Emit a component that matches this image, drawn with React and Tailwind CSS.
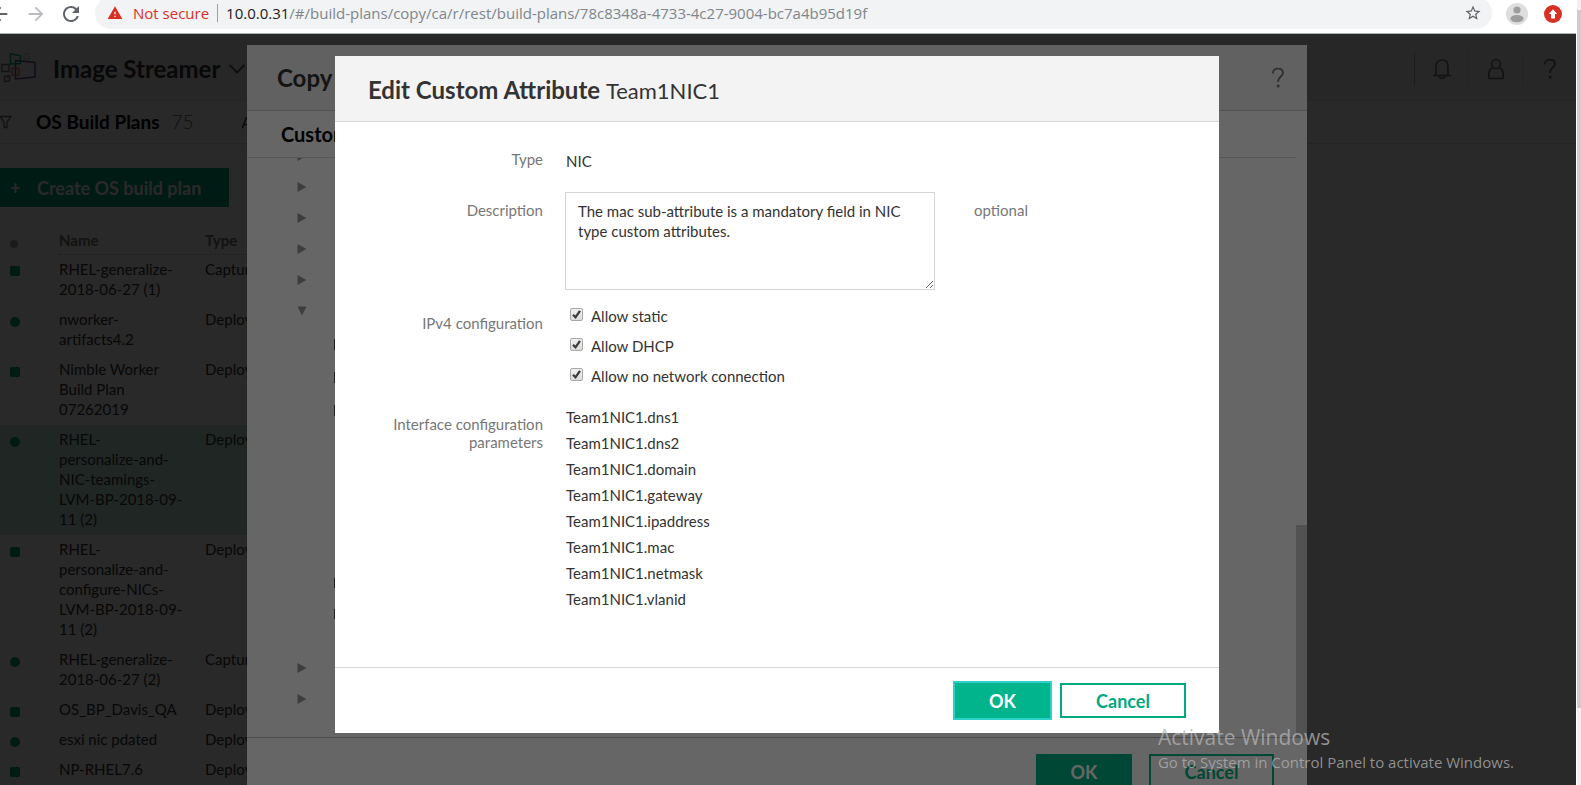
import { MdArrowBack, MdArrowForward, MdRefresh, MdStarBorder, MdWarning } from "react-icons/md";

const buildPlans = [
  { name: "RHEL-generalize-\n2018-06-27 (1)", type: "Capture" },
  { name: "nworker-\nartifacts4.2", type: "Deploy", round: true },
  { name: "Nimble Worker\nBuild Plan\n07262019", type: "Deploy" },
  { name: "RHEL-\npersonalize-and-\nNIC-teamings-\nLVM-BP-2018-09-\n11 (2)", type: "Deploy", round: true, selected: true },
  { name: "RHEL-\npersonalize-and-\nconfigure-NICs-\nLVM-BP-2018-09-\n11 (2)", type: "Deploy" },
  { name: "RHEL-generalize-\n2018-06-27 (2)", type: "Capture", round: true },
  { name: "OS_BP_Davis_QA", type: "Deploy" },
  { name: "esxi nic pdated", type: "Deploy", round: true },
  { name: "NP-RHEL7.6", type: "Deploy" },
];

const ipv4Options = [
  { id: "allow-static", label: "Allow static" },
  { id: "allow-dhcp", label: "Allow DHCP" },
  { id: "allow-none", label: "Allow no network connection" },
];

const parameters = ["dns1", "dns2", "domain", "gateway", "ipaddress", "mac", "netmask", "vlanid"];

function BrowserBar() {
  return (
    <header className="flex h-[34px] shrink-0 overflow-hidden border-b border-[#a9b3ac] bg-white font-['Open_Sans',sans-serif] text-[15px]">
      <div className="-ml-[11px] flex h-[27px] shrink-0 items-center">
        <button aria-label="Back" className="text-[#5f6368]"><MdArrowBack size={22} /></button>
        <button aria-label="Forward" className="ml-[14px] text-[#b9bbbe]"><MdArrowForward size={22} /></button>
        <button aria-label="Reload" className="ml-3 text-[#5f6368]"><MdRefresh size={24} /></button>
      </div>
      <div className="-mt-[3px] ml-3 flex h-8 min-w-0 flex-1 items-center rounded-full bg-[#f1f3f4] pr-[10px] pl-3">
        <MdWarning size={16} className="shrink-0 text-[#d93025]" />
        <span className="ml-[10px] shrink-0 text-[#d93025]">Not secure</span>
        <span className="mx-2 h-[18px] w-px shrink-0 bg-[#9aa0a6]" />
        <span className="flex-1 truncate text-[#80868b]">
          <span className="text-[#202124]">10.0.0.31</span>/#/build-plans/copy/ca/r/rest/build-plans/78c8348a-4733-4c27-9004-bc7a4b95d19f
        </span>
        <button aria-label="Bookmark this page" className="text-[#5f6368]"><MdStarBorder size={18} /></button>
      </div>
      <div className="mr-[14px] ml-[14px] flex h-[27px] shrink-0 items-center gap-4">
        <button aria-label="Profile">
          <svg width="22" height="22" viewBox="0 0 22 22">
            <circle cx="11" cy="11" r="11" fill="#dedede" />
            <circle cx="11" cy="7" r="3.6" fill="#9d9d9d" />
            <ellipse cx="11" cy="15.6" rx="6.6" ry="3.6" fill="#9d9d9d" />
          </svg>
        </button>
        <button aria-label="Update">
          <svg width="18" height="18" viewBox="0 0 18 18">
            <circle cx="9" cy="9" r="9" fill="#d93025" />
            <path d="M9 4.2 13.2 9H11v4.4H7V9H4.8z" fill="#fff" />
          </svg>
        </button>
      </div>
    </header>
  );
}

function HelpIcon() {
  return (
    <svg width="14" height="22" viewBox="0 0 14 22" fill="none" stroke="currentColor" strokeWidth="1.8">
      <path d="M1.800 6.400V5.900A4.900 4.900 0 0 1 6.900 1.600c2.900 0 5.100 1.700 5.100 4.500 0 3.400-4.800 3.800-4.800 7.400v1.600" />
      <circle cx="7.2" cy="19" r="1.5" fill="currentColor" stroke="none" />
    </svg>
  );
}

function AppPage() {
  return (
    <div className="h-full bg-white">
      <div className="flex h-[67px] items-center border-b border-[#e6e6e6] bg-[#f4f4f4] pt-1">
        <svg className="ml-px shrink-0" width="36" height="32" viewBox="0 0 36 32" fill="none" strokeWidth="1.4">
          <path d="M14.500 7.500 34 9.500V24L14.500 26z" stroke="#614a9a" />
          <path d="M9.500.800 19.500 2.800V10.500L9.500 11z" stroke="#01a982" />
          <path d="M.8 11.500H8v7H.8z" stroke="#777" />
          <path d="M11 15.500H18v6.500H11z" stroke="#d97b4a" />
          <path d="M3.500 23.500 8.500 23v5L3.500 28.500z" stroke="#777" />
          <path d="M23 .800h5v5h-5z" stroke="#d0d0d0" />
        </svg>
        <button className="ml-4 flex items-center gap-2 text-2xl font-bold text-[#333]">
          Image Streamer
          <svg width="18" height="12" viewBox="0 0 18 12" fill="none" stroke="#555" strokeWidth="1.8"><path d="m1.500 2 7.500 7.500L16.500 2" /></svg>
        </button>
        <div className="ml-auto flex text-[#777]">
          <button aria-label="Notifications" className="flex h-[34px] w-[54px] items-center justify-center border-l border-[#bbb]">
            <svg width="20" height="22" viewBox="0 0 20 22" fill="none" stroke="currentColor" strokeWidth="1.600"><path d="M1 17.500h18M4 17V8.500C4 4.500 6.300 2 10 2s6 2.500 6 6.500V17M7 18c.5 1.500 1.500 2.300 3 2.300s2.500-.8 3-2.300" /></svg>
          </button>
          <button aria-label="Account" className="flex h-[34px] w-[54px] items-center justify-center border-l border-[#ddd]">
            <svg width="18" height="22" viewBox="0 0 18 22" fill="none" stroke="currentColor" strokeWidth="1.600"><circle cx="9" cy="6" r="4.500" /><path d="M6 9.500C3 11 1.800 13.500 1.800 16v4.500h14.400V16c0-2.500-1.200-5-4.200-6.500" /></svg>
          </button>
          <button aria-label="Help" className="flex h-[34px] w-[54px] items-center justify-center border-l border-[#ddd]"><HelpIcon /></button>
        </div>
      </div>
      <div className="flex h-[43px] items-center border-b border-[#ddd]">
        <svg className="-ml-px shrink-0" width="13" height="14" viewBox="0 0 13 14" fill="none" stroke="#777" strokeWidth="1.300"><path d="M1 1.500h11L8 7v5.500H5V7z" /></svg>
        <h1 className="ml-6 text-[19px] font-bold text-black">OS Build Plans</h1>
        <span className="ml-3 text-[19px] font-light text-[#666]">75</span>
        <span className="ml-12 text-[15px] text-[#333]">All</span>
      </div>
      <button className="mt-6 flex h-[39px] w-[229px] items-center bg-[#01a982] pl-[10px] text-lg font-bold text-white">
        <span className="w-[27px] text-left">+</span>Create OS build plan
      </button>
      <table className="w-[320px] table-fixed text-left text-[15px] leading-5 text-[#333]">
        <colgroup><col className="w-[59px]" /><col className="w-[146px]" /><col /></colgroup>
        <thead className="text-[#777]">
          <tr className="h-[47px]">
            <th className="pt-[26px] pl-[10px]"><span className="block size-2 rounded-full bg-[#aaa]" /></th>
            <th className="border-b border-dotted border-[#bbb] pt-5 font-bold">Name</th>
            <th className="border-b border-dotted border-[#bbb] pt-5 font-bold">Type</th>
          </tr>
        </thead>
        <tbody>
          {buildPlans.map((p) => (
            <tr key={p.name} className={p.selected ? "bg-[#cceee4] align-top" : "align-top"}>
              <td className="pt-3 pl-[10px]">
                <span className={p.round ? "block size-[10px] rounded-full bg-[#01a982]" : "block size-[10px] rounded-xs bg-[#01a982]"} />
              </td>
              <td className="pt-1 pb-[6px] whitespace-pre">{p.name}</td>
              <td className="pt-1 pb-[6px]">{p.type}</td>
            </tr>
          ))}
        </tbody>
      </table>
    </div>
  );
}

function RowArrow({ open }) {
  return (
    <button aria-label={open ? "Collapse" : "Expand"} className="flex h-[31px] w-full items-center pl-[50px] text-[#999]">
      <svg width="10" height="10" viewBox="0 0 10 10" fill="currentColor"><path d={open ? "M.500.500h9L5 9.500z" : "M.500 0 9.500 5 .500 10z"} /></svg>
    </button>
  );
}

function CopyDialog() {
  return (
    <section className="flex w-full max-w-[1060px] flex-col overflow-hidden bg-white">
      <div className="flex h-[66px] shrink-0 items-center justify-between border-b border-[#ccc] bg-[#f2f2f2] pr-[22px] pl-[30px]">
        <h2 className="text-2xl font-bold text-[#333]">Copy</h2>
        <button aria-label="Help" className="text-[#777]"><HelpIcon /></button>
      </div>
      <h3 className="mr-[11px] flex h-[47px] shrink-0 items-center border-b border-[#ddd] pl-[34px] text-xl font-bold text-black">Custom attributes</h3>
      <div className="flex min-h-0 flex-1 overflow-hidden">
        <div className="flex-1">
          <div className="-mt-[18px]">
            <RowArrow /><RowArrow /><RowArrow /><RowArrow /><RowArrow /><RowArrow open />
          </div>
          <div className="pt-[2px] pb-[23px] pl-[87px]">
            {[0, 1, 2].map((i) => <div key={i} className="flex h-[33px] items-center"><span className="h-[11px] w-px bg-[#555]" /></div>)}
            <div className="h-[140px]" />
            {[0, 1].map((i) => <div key={i} className="flex h-[31px] items-center"><span className="h-[10px] w-px bg-[#555]" /></div>)}
          </div>
          <RowArrow /><RowArrow />
        </div>
        <div className="flex w-[11px] flex-col justify-end">
          <div className="h-[212px] bg-[#ccc]" />
        </div>
      </div>
      <div className="flex h-12 shrink-0 items-start justify-end gap-[17px] overflow-hidden border-t border-[#bbb] pt-4 pr-[33px] text-lg font-bold">
        <button className="h-[35px] w-24 shrink-0 bg-[#01b188] text-white">OK</button>
        <button className="h-[35px] w-[125px] shrink-0 border-2 border-[#01b188] text-[#01b188]">Cancel</button>
      </div>
    </section>
  );
}

function Field({ label, htmlFor, labelClass, className, children }) {
  return (
    <div className={`grid grid-cols-[175px_1fr] gap-x-[23px] ${className}`}>
      <label htmlFor={htmlFor} className={`text-right leading-[18px] text-[#777] ${labelClass}`}>{label}</label>
      {children}
    </div>
  );
}

function EditDialog() {
  return (
    <form role="dialog" aria-labelledby="edit-title" className="w-full max-w-[884px] bg-white text-[15px] leading-5 text-[#333]">
      <div className="flex h-[66px] items-center border-b border-[#d8d8d8] bg-[#f3f3f3] pt-[2px] pl-[33px]">
        <h2 id="edit-title" className="text-2xl font-bold">Edit Custom Attribute <span className="text-[22px] font-normal">Team1NIC1</span></h2>
      </div>
      <div className="px-[33px] pt-7 pb-[55px]">
        <Field label="Type" className="mb-5"><span className="leading-[22px]">NIC</span></Field>
        <Field label="Description" htmlFor="description" labelClass="pt-[9px]" className="mb-3">
          <div className="flex gap-[39px]">
            <textarea
              id="description"
              className="-ml-px h-[98px] w-[370px] border border-[#d5d5d5] px-3 py-2 outline-none"
              defaultValue="The mac sub-attribute is a mandatory field in NIC type custom attributes."
            />
            <span className="pt-2 text-[#777]">optional</span>
          </div>
        </Field>
        <Field label="IPv4 configuration" htmlFor="allow-static" labelClass="pt-3" className="mb-3">
          <div>
            {ipv4Options.map((o) => (
              <div key={o.id} className="flex h-[30px] items-start pl-1">
                <span className="mt-[6px] grid size-[13px]">
                  <input id={o.id} type="checkbox" defaultChecked className="peer col-start-1 row-start-1 size-[13px] appearance-none rounded-xs border border-[#a8a8a8] bg-linear-to-b from-[#f0f0f0] to-[#dcdcdc]" />
                  <svg className="pointer-events-none invisible col-start-1 row-start-1 peer-checked:visible" width="13" height="13" viewBox="0 0 13 13" fill="none" stroke="#3c3c3c" strokeWidth="2.300"><path d="m3 6.800 2.500 2.500L10 2.800" /></svg>
                </span>
                <label htmlFor={o.id} className="pl-2 leading-7">{o.label}</label>
              </div>
            ))}
          </div>
        </Field>
        <Field label="Interface configuration parameters" labelClass="pt-[11px]">
          <ul>
            {parameters.map((p) => <li key={p} className="leading-[26px]">Team1NIC1.{p}</li>)}
          </ul>
        </Field>
      </div>
      <div className="flex justify-end gap-[10px] border-t border-[#d8d8d8] px-[33px] py-[15px] text-lg font-bold">
        <button type="button" className="h-[35px] w-[95px] bg-[#01b48c] text-white ring-2 ring-[#2ad2c9]">OK</button>
        <button type="button" className="h-[35px] w-[126px] border-2 border-[#01a982] text-[#01a982]">Cancel</button>
      </div>
    </form>
  );
}

export default function App() {
  return (
    <div className="flex h-screen overflow-hidden bg-white">
      <div className="flex min-w-0 flex-1 flex-col">
        <BrowserBar />
        <main className="relative min-h-0 flex-1 overflow-hidden font-[Lato,sans-serif]">
          <AppPage />
          <div className="absolute inset-0 flex justify-center bg-black/60 pt-[11px] pr-[22px]"><CopyDialog /></div>
          <div className="absolute inset-0 flex items-start justify-center bg-black/60 pt-[22px] pr-[22px]"><EditDialog /></div>
          <div className="pointer-events-none absolute right-[62px] bottom-3 font-['Open_Sans',sans-serif] text-[#b4b4b4]/75">
            <p className="text-[21px] leading-7">Activate Windows</p>
            <p className="text-[15px] leading-[22px]">Go to System in Control Panel to activate Windows.</p>
          </div>
        </main>
      </div>
      <div className="flex w-[5px] shrink-0 flex-col border-l border-white bg-[#f1f1f1] pt-[10px]">
        <div className="h-[90%] bg-[#cdcdcd]" />
      </div>
    </div>
  );
}
